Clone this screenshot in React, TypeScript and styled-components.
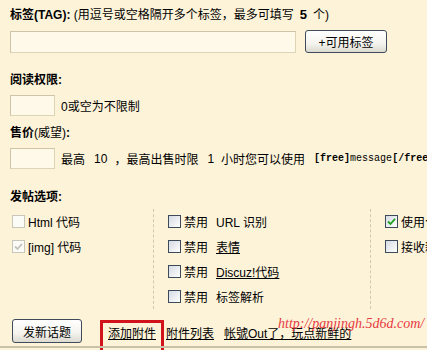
import React from "react";
import styled, { createGlobalStyle } from "styled-components";

const Global = createGlobalStyle`
  html, body {
    margin: 0;
    padding: 0;
    background: #fdf3d9;
    overflow: hidden;
  }
  body {
    font-family: Tahoma, "Liberation Sans", "Noto Sans CJK SC", sans-serif;
    font-size: 12px;
    color: #000;
  }
`;

const Page = styled.div`
  width: 427px;
  height: 350px;
  box-sizing: border-box;
  padding: 5px 0 0 10px;
  overflow: hidden;
  white-space: nowrap;
  position: relative;
`;

const Label = styled.div<{ $mt?: number }>`
  line-height: 20px;
  height: 20px;
  margin-top: ${(p) => p.$mt ?? 0}px;
`;

const B = styled.b`
  font-weight: bold;
`;

const Big = styled.b`
  font-weight: bold;
  font-size: 13px;
  margin: 0 6px;
`;

const Row = styled.div<{ $mt?: number; $h?: number }>`
  display: flex;
  align-items: center;
  gap: 6px;
  margin-top: ${(p) => p.$mt ?? 5}px;
  height: ${(p) => p.$h ?? 21}px;
`;

const TextInput = styled.div<{ $w: number; $h: number }>`
  width: ${(p) => p.$w}px;
  height: ${(p) => p.$h}px;
  box-sizing: border-box;
  background: #fff9e9;
  border: 1px solid #ddd3b6;
  border-top-color: #cfc4a6;
  border-left-color: #cfc4a6;
  flex: none;
`;

const Button = styled.div<{ $w: number; $h: number; $ml?: number }>`
  width: ${(p) => p.$w}px;
  height: ${(p) => p.$h}px;
  margin-left: ${(p) => p.$ml ?? 0}px;
  box-sizing: border-box;
  border: 1px solid #3d4b5a;
  border-radius: 3px;
  background: linear-gradient(#ffffff, #f4f3ee 60%, #dcdad0);
  display: flex;
  align-items: center;
  justify-content: center;
  font-size: 12px;
  flex: none;
`;

const Hint = styled.span`
  display: inline-flex;
  align-items: center;
`;

const Num = styled.span`
  margin: 0 7px 0 9px;
`;

const Mono = styled.span<{ $bold?: boolean; $ml?: number }>`
  font-family: "Liberation Mono", "Courier New", monospace;
  font-size: 10px;
  font-weight: ${(p) => (p.$bold ? "bold" : "normal")};
  margin-left: ${(p) => p.$ml ?? 0}px;
`;

const Options = styled.div`
  display: grid;
  grid-template-columns: 143px 217px 1fr;
  margin-top: 2px;
`;

const Col = styled.div<{ $divider?: boolean }>`
  display: flex;
  flex-direction: column;
  padding-left: ${(p) => (p.$divider ? 14 : 2)}px;
  border-left: ${(p) => (p.$divider ? "1px dashed #cfc7b0" : "none")};
`;

const Opt = styled.div`
  height: 25px;
  display: flex;
  align-items: center;
  gap: 3px;
`;

const Box = styled.span<{ $disabled?: boolean }>`
  width: 13px;
  height: 13px;
  box-sizing: border-box;
  flex: none;
  display: inline-flex;
  align-items: center;
  justify-content: center;
  border: 1px solid ${(p) => (p.$disabled ? "#c9c7ba" : "#3c4a5a")};
  background: ${(p) =>
    p.$disabled
      ? "#fbfbf8"
      : "linear-gradient(135deg, #d5dbe4, #eef0f3 60%, #ffffff)"};
`;

const Gap = styled.span`
  margin-left: 5px;
`;

const U = styled.span`
  text-decoration: underline;
`;

const Footer = styled.div`
  display: flex;
  align-items: center;
  margin-top: 10px;
  margin-left: 2px;
  height: 24px;
  position: relative;
`;

const Links = styled.div`
  display: flex;
  align-items: center;
  gap: 10px;
  margin-left: 26px;
  padding-top: 3px;
`;

const Link = styled.span<{ $marked?: boolean }>`
  text-decoration: underline;
  position: relative;
  &::after {
    content: "";
    display: ${(p) => (p.$marked ? "block" : "none")};
    position: absolute;
    left: -8px;
    top: -4px;
    width: 58px;
    height: 30px;
    border: 3px solid #d1141c;
  }
`;

const Watermark = styled.span`
  position: absolute;
  left: 266px;
  top: -3px;
  font-family: "Liberation Serif", serif;
  font-style: italic;
  font-size: 14px;
  color: #e5262e;
  opacity: 0.9;
`;

const BottomLine = styled.div`
  position: absolute;
  left: 0;
  right: 0;
  top: 346px;
  height: 2px;
  background: #c9c1a8;
`;

const Check = ({ color }: { color: string }) => (
  <svg width="9" height="9" viewBox="0 0 9 9">
    <path d="M1 4.5 L3.5 7 L8 1.8" fill="none" stroke={color} strokeWidth="1.8" />
  </svg>
);

export default function App() {
  return (
    <>
      <Global />
      <Page>
        <Label>
          <B>标签(TAG):</B> (用逗号或空格隔开多个标签，最多可填写<Big>5</Big>个)
        </Label>
        <Row $mt={5} $h={23}>
          <TextInput $w={286} $h={22} />
          <Button $w={82} $h={23} $ml={3}>+可用标签</Button>
        </Row>

        <Label $mt={17}>
          <B>阅读权限:</B>
        </Label>
        <Row>
          <TextInput $w={45} $h={21} />
          <Hint>0或空为不限制</Hint>
        </Row>

        <Label $mt={7}>
          <B>售价</B>(威望)<B>:</B>
        </Label>
        <Row>
          <TextInput $w={45} $h={21} />
          <Hint>
            最高<Num>10</Num>，最高出售时限<Num>1</Num>小时您可以使用
            <Mono $bold $ml={9}>[free]</Mono>
            <Mono>message</Mono>
            <Mono $bold>[/free]</Mono>
          </Hint>
        </Row>

        <Label $mt={18}>
          <B>发帖选项:</B>
        </Label>
        <Options>
          <Col>
            <Opt>
              <Box $disabled />
              Html 代码
            </Opt>
            <Opt>
              <Box $disabled>
                <Check color="#c4c4bb" />
              </Box>
              [img] 代码
            </Opt>
          </Col>
          <Col $divider>
            <Opt>
              <Box />
              禁用<Gap>URL 识别</Gap>
            </Opt>
            <Opt>
              <Box />
              禁用<Gap><U>表情</U></Gap>
            </Opt>
            <Opt>
              <Box />
              禁用<Gap><U>Discuz!代码</U></Gap>
            </Opt>
            <Opt>
              <Box />
              禁用<Gap>标签解析</Gap>
            </Opt>
          </Col>
          <Col $divider>
            <Opt>
              <Box>
                <Check color="#21a121" />
              </Box>
              使用个人签名
            </Opt>
            <Opt>
              <Box />
              接收新回复邮件通知
            </Opt>
          </Col>
        </Options>

        <Footer>
          <Button $w={70} $h={24}>发新话题</Button>
          <Links>
            <Link $marked>添加附件</Link>
            <Link>附件列表</Link>
            <Link>帐號Out了，玩点新鲜的</Link>
          </Links>
          <Watermark>http://panjingh.5d6d.com/</Watermark>
        </Footer>
        <BottomLine />
      </Page>
    </>
  );
}
